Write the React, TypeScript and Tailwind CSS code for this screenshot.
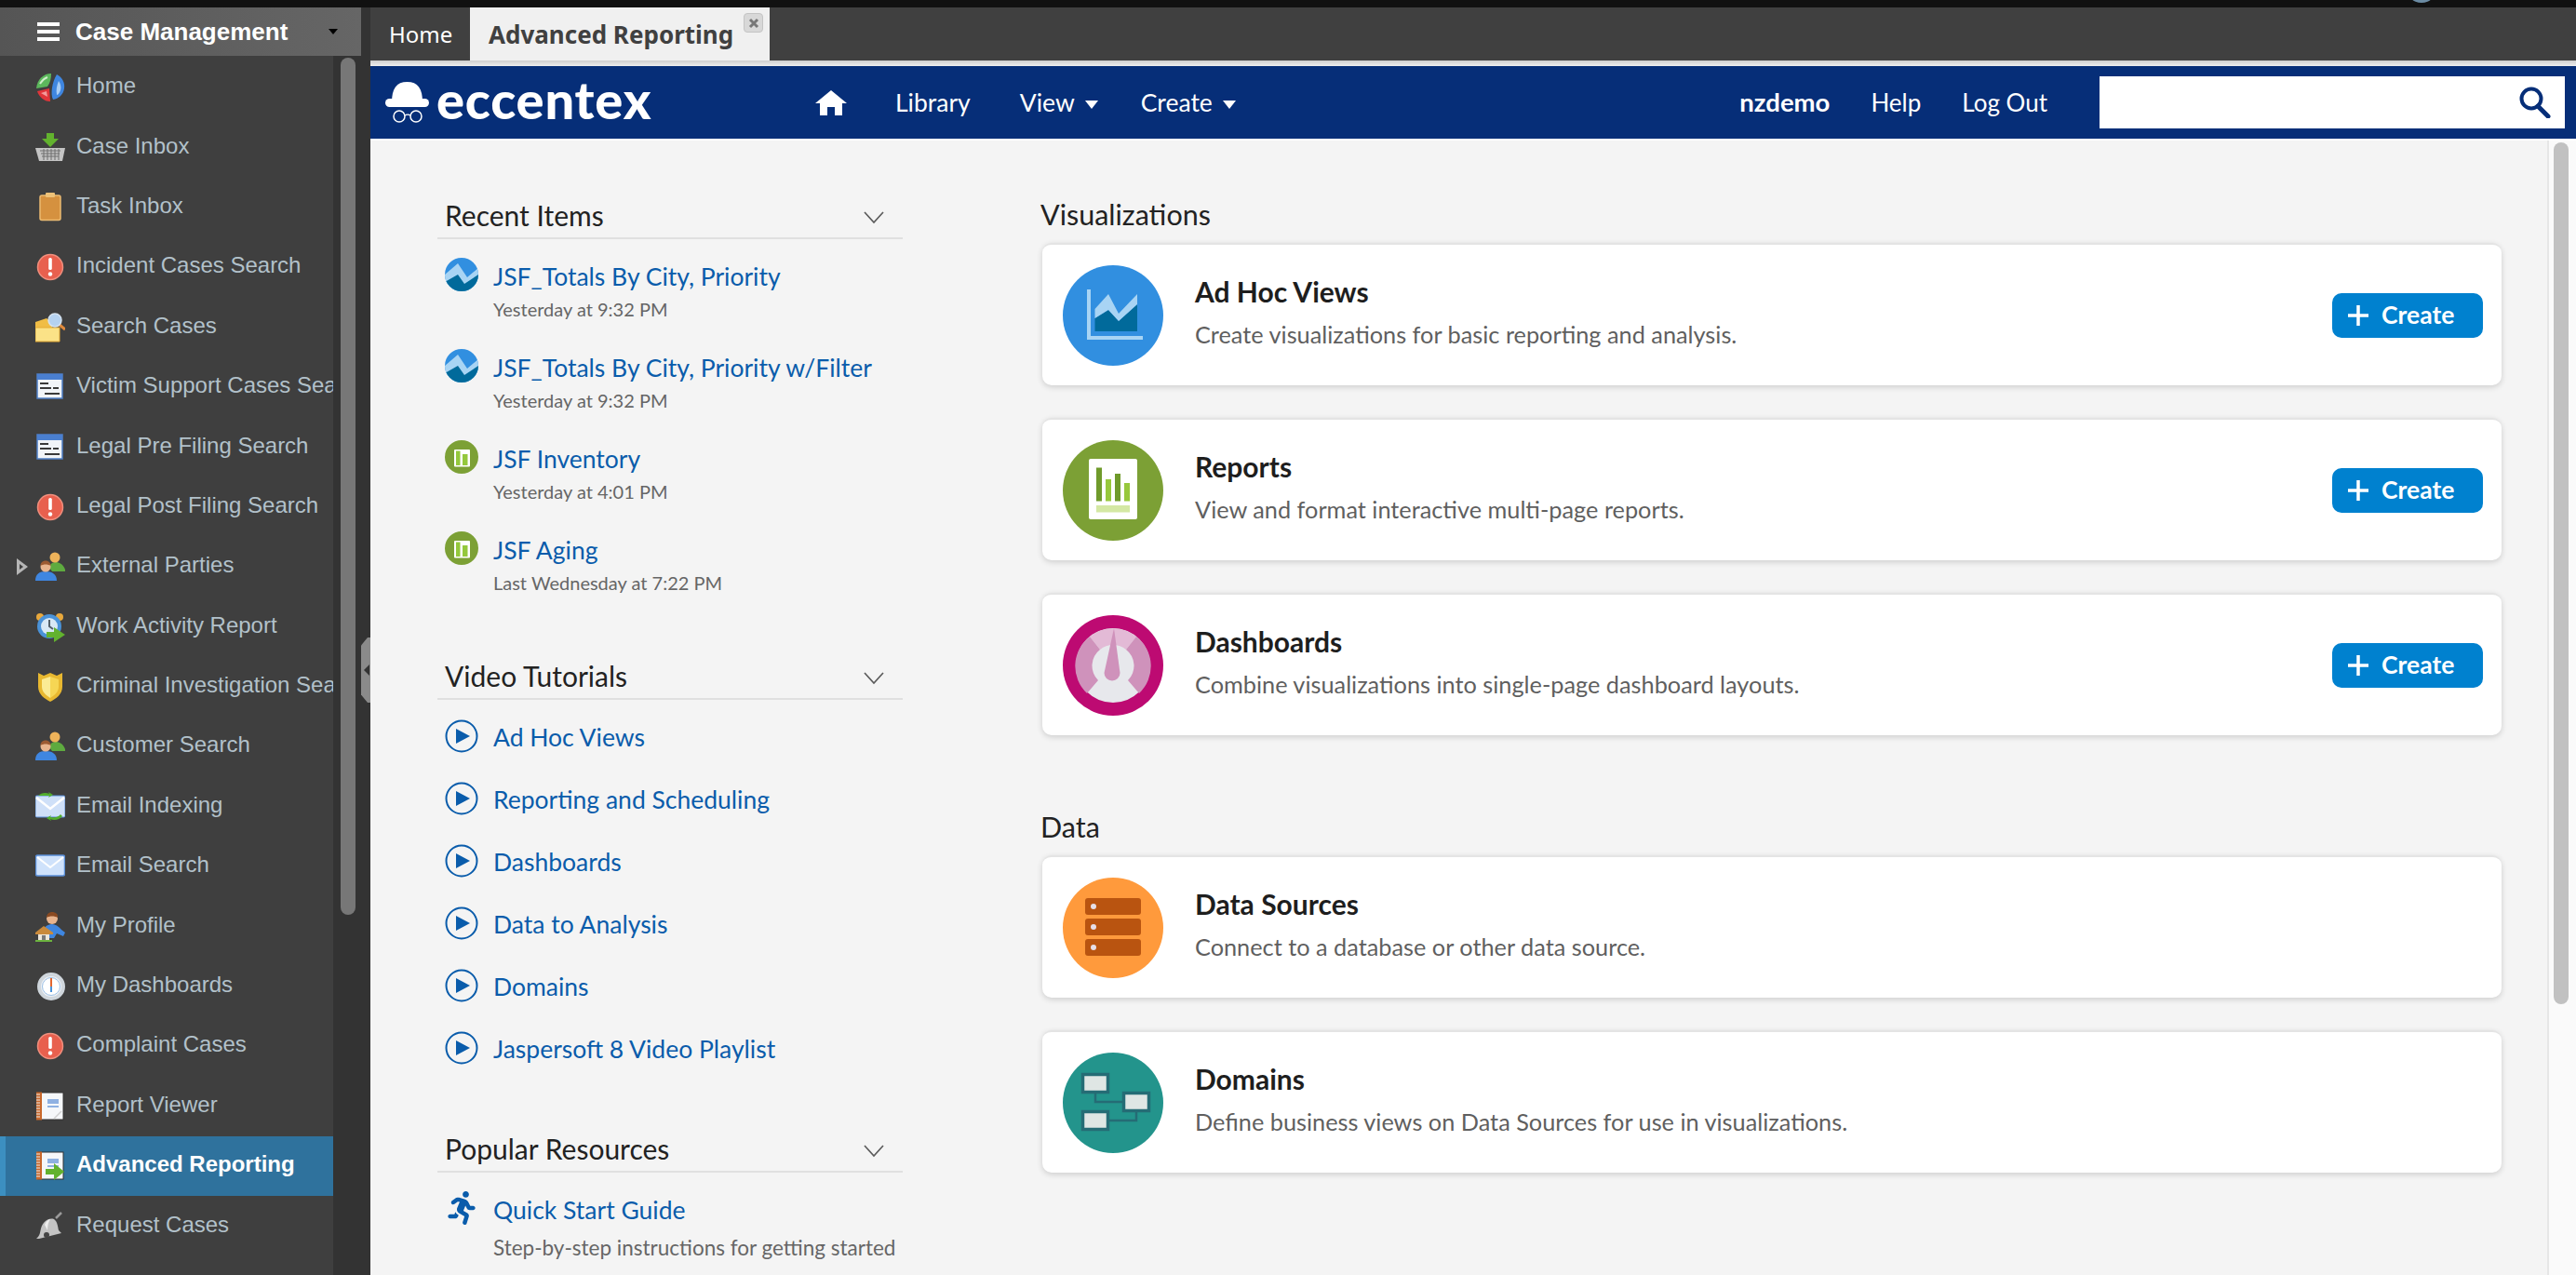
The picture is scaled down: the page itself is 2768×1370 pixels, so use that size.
import React from "react";
import { FaRunning } from "react-icons/fa";

const SANS = "font-['Liberation_Sans',Arial,sans-serif]";
const LATO = "font-['Lato','Noto_Sans',sans-serif]";

function SideIcon({ kind }: { kind: string }) {
  const c = "w-8 h-8 shrink-0";
  switch (kind) {
    case "pie":
      return (
        <svg viewBox="0 0 32 32" className={c}>
          <path d="M17 1C9 1 2 7 1 17l12-2c3-4 4-9 4-14z" fill="#5cb85c" />
          <path d="M5 12c2-3 5-6 8-7" stroke="#cfeecb" strokeWidth="2" fill="none" />
          <path d="M23 2c6 3 9 9 8 15-1 7-6 11-12 12-3-6-1-19 4-27z" fill="#3f86e0" />
          <path d="M25 9c2 3 3 6 2 10-1 3-3 5-4 5-1-5 0-10 2-15z" fill="#a8cdf5" />
          <path d="M2 20l13-3 1 14c-7 0-12-5-14-11z" fill="#e0353a" />
          <path d="M6 22l6-2 1 6z" fill="#f39a9a" />
        </svg>
      );
    case "basket":
      return (
        <svg viewBox="0 0 32 32" className={c}>
          <path d="M0 16h32l-3 14H4z" fill="#c4c4c4" />
          <path d="M5 19h22M6 22h20M7 25h18M9 17v12M13 17v12M17 17v12M21 17v12M25 17v12" stroke="#6e6e6e" strokeWidth="1" />
          <path d="M12 0h8v6h5l-9 9-9-9h5z" fill="#62b22e" />
        </svg>
      );
    case "clipboard":
      return (
        <svg viewBox="0 0 32 32" className={c}>
          <rect x="5" y="3" width="22" height="26.5" rx="2" fill="#d5913f" stroke="#ecbb72" strokeWidth="1.5" />
          <rect x="11" y="0" width="10" height="5" rx="1" fill="#eec278" />
        </svg>
      );
    case "alert":
      return (
        <svg viewBox="0 0 32 32" className={c}>
          <circle cx="16" cy="16" r="13.5" fill="#e8604e" stroke="#ef8f7e" strokeWidth="1.5" />
          <rect x="14.2" y="6" width="3.6" height="13" rx="1.6" fill="#fff" />
          <circle cx="16" cy="23.5" r="2.2" fill="#fff" />
        </svg>
      );
    case "folder":
      return (
        <svg viewBox="0 0 32 32" className={c}>
          <path d="M0 10l12-4 6 5v20H0z" fill="#f0bd45" />
          <path d="M0 16h26v15H0z" fill="#fbe287" stroke="#e5ab35" strokeWidth="1" />
          <path d="M26 13l6 5" stroke="#e08a3c" strokeWidth="3" />
          <circle cx="21" cy="8" r="7" fill="#b5d2f0" stroke="#d5e3f0" strokeWidth="1.5" />
        </svg>
      );
    case "form":
      return (
        <svg viewBox="0 0 32 32" className={c}>
          <rect x="2" y="2" width="27" height="26" fill="#f1f4f8" stroke="#4f7fc5" strokeWidth="1.5" />
          <rect x="2" y="2" width="27" height="6" fill="#4a7fd0" />
          <path d="M5 12h9M5 17h12M10 23h16M19 17h6" stroke="#3a3a3a" strokeWidth="2.2" />
        </svg>
      );
    case "people":
      return (
        <svg viewBox="0 0 32 32" className={c}>
          <path d="M15 17c0-4 4-6 7-6s8 2 10 8v2H18z" fill="#5eaa3f" />
          <circle cx="21" cy="6" r="5.5" fill="#eeb35a" />
          <path d="M0 31c0-7 4-10 11-10s12 3 12 10z" fill="#3f86e0" />
          <circle cx="11" cy="16" r="5.5" fill="#e8b48e" />
          <path d="M5.5 15c0-4 3-5.5 5.5-5.5s5.500 1.500 5.500 5.500c-3-2-8-2-11 0z" fill="#9c5a32" />
        </svg>
      );
    case "clock":
      return (
        <svg viewBox="0 0 32 32" className={c}>
          <circle cx="5" cy="5" r="4" fill="#e8a83c" />
          <circle cx="26" cy="5" r="4" fill="#e8a83c" />
          <circle cx="15" cy="15" r="13" fill="#4a92d8" />
          <circle cx="15" cy="15" r="9" fill="#d8e8f5" />
          <path d="M15 8v7l4 3" stroke="#53606a" strokeWidth="2" fill="none" />
          <path d="M12 21h8v-5l12 8-12 8v-5h-8z" fill="#62b22e" />
        </svg>
      );
    case "shield":
      return (
        <svg viewBox="0 0 32 32" className={c}>
          <path d="M3 1l6 3 7-3 7 3 6-3v15c0 8-7 13-13 16C10 29 3 24 3 16z" fill="#e8b830" />
          <path d="M7 8l9-3v23c-5-3-9-7-9-12z" fill="#fbeb94" />
          <path d="M16 5l9 3v8c0 5-4 9-9 12z" fill="#f6d654" />
        </svg>
      );
    case "mailsync":
      return (
        <svg viewBox="0 0 32 32" className={c}>
          <rect x="0" y="4" width="32" height="23" rx="1.500" fill="#cfe0f8" stroke="#5b8fd8" />
          <path d="M1 6l15 12L31 6" stroke="#fff" strokeWidth="2.500" fill="none" />
          <path d="M3 4c3-3 8-4 12-2l-1-2 5 3-5 3 1-2" fill="#52ae2c" />
          <path d="M29 26c-3 4-9 5-13 3l1 2-5-3 5-3-1 2c4 1 9 0 11-3z" fill="#52ae2c" />
        </svg>
      );
    case "mail":
      return (
        <svg viewBox="0 0 32 32" className={c}>
          <rect x="0.5" y="4" width="31" height="22" rx="2" fill="#cfe2fb" stroke="#5b8fd8" strokeWidth="1.500" />
          <path d="M2 6l14 11L30 6" stroke="#fff" strokeWidth="2" fill="none" />
        </svg>
      );
    case "profile":
      return (
        <svg viewBox="0 0 32 32" className={c}>
          <path d="M10 17c2-3 5-4 8-4s7 2 10 6l4 3-2 4-7-3-3 5H12z" fill="#3f86e0" />
          <circle cx="18" cy="7" r="6" fill="#e8b48e" />
          <path d="M12 6c0-4 3-6 6-6s7 2 6 6c-3-2-9-2-12 0z" fill="#8a4a22" />
          <path d="M0 22l9-7 10 7v2H0z" fill="#c98a3c" />
          <path d="M3 24h12v7H3z" fill="#ece6da" />
          <rect x="7" y="25" width="4" height="6" fill="#7a7a7a" />
          <rect x="0" y="30" width="18" height="2" fill="#6cb33f" />
        </svg>
      );
    case "gauge":
      return (
        <svg viewBox="0 0 32 32" className={c}>
          <circle cx="17" cy="16" r="13" fill="#eef1f5" stroke="#cfd6dc" strokeWidth="4" />
          <circle cx="17" cy="16" r="9.500" fill="#fff" stroke="#9cc0e5" strokeWidth="1" />
          <path d="M17 7v9" stroke="#e2662f" strokeWidth="2" />
          <path d="M17 16v6" stroke="#4a92d8" strokeWidth="2" />
        </svg>
      );
    case "book":
    case "bookarrow":
      return (
        <svg viewBox="0 0 32 32" className={c}>
          <rect x="3" y="1" width="27" height="29" fill="#f5f7fa" stroke="#333" strokeWidth="1" />
          <rect x="1" y="0.5" width="6" height="30" fill="#c8682c" />
          <path d="M1 3h4M1 6h4M1 9h4M1 12h4M1 15h4M1 18h4M1 21h4M1 24h4M1 27h4" stroke="#eee" strokeWidth="1" />
          <rect x="13" y="8" width="12" height="5" fill="#8fb1e2" />
          <rect x="13" y="15" width="12" height="2" fill="#8fb1e2" />
          {kind === "bookarrow" ? (
            <path d="M11 19h9v-6l11 9-11 9v-6h-9z" fill="#62b22e" />
          ) : (
            <path d="M20 29l8-8" stroke="#cfcfcf" strokeWidth="1.500" />
          )}
        </svg>
      );
    case "bell":
      return (
        <svg viewBox="0 0 32 32" className={c}>
          <path d="M20 8c4 3 4 8 5 12l3 3-24 6-3 0c4-3 4-7 5-11 2-7 8-12 14-10z" fill="#c4c4c4" />
          <path d="M10 14c1-3 3-5 6-6-2 3-3 7-3 12z" fill="#eee" />
          <circle cx="12" cy="25" r="3" fill="#444" />
          <path d="M22 7l6-6" stroke="#9a9a9a" strokeWidth="2.500" />
        </svg>
      );
    default:
      return (
        <svg viewBox="0 0 32 32" className={c}>
          <circle cx="16" cy="20" r="14" fill="#4a92d8" />
        </svg>
      );
  }
}

const rows: [string, string][] = [
  ["Home", "pie"],
  ["Case Inbox", "basket"],
  ["Task Inbox", "clipboard"],
  ["Incident Cases Search", "alert"],
  ["Search Cases", "folder"],
  ["Victim Support Cases Search", "form"],
  ["Legal Pre Filing Search", "form"],
  ["Legal Post Filing Search", "alert"],
  ["External Parties", "people"],
  ["Work Activity Report", "clock"],
  ["Criminal Investigation Search", "shield"],
  ["Customer Search", "people"],
  ["Email Indexing", "mailsync"],
  ["Email Search", "mail"],
  ["My Profile", "profile"],
  ["My Dashboards", "gauge"],
  ["Complaint Cases", "alert"],
  ["Report Viewer", "book"],
  ["Advanced Reporting", "bookarrow"],
  ["Request Cases", "bell"],
];

function Sidebar() {
  return (
    <aside className={`w-[398px] shrink-0 bg-[#333333] flex flex-col relative ${SANS}`}>
      <div className="h-[52px] w-[388px] bg-gradient-to-r from-[#555555] to-[#666666] flex items-center pl-[40px] shrink-0">
        <div className="w-6 flex flex-col gap-[4px]">
          <div className="h-[4px] bg-white" />
          <div className="h-[4px] bg-white" />
          <div className="h-[4px] bg-white" />
        </div>
        <span className="ml-[17px] text-[26px] font-bold text-white leading-none whitespace-nowrap">Case Management</span>
        <div className="ml-[44px] w-0 h-0 border-x-[5px] border-x-transparent border-t-[6px] border-t-black" />
      </div>
      <div className="flex flex-1 min-h-0">
        <div className="w-[358px] bg-[#3f3f3f] overflow-hidden pt-[2px]">
          {rows.map(([label, icon]) => {
            const active = label === "Advanced Reporting";
            return (
              <div
                key={label}
                className={`h-[64.4px] flex items-center ${active ? "bg-[#2f729d] border-l-[6px] border-l-[#3c8fc0]" : ""}`}
              >
                <div className={`${active ? "w-[32px]" : "w-[38px]"} shrink-0 flex justify-end pr-[8px]`}>
                  {label === "External Parties" && (
                    <svg viewBox="0 0 12 18" className="w-[12px] h-[18px]">
                      <path d="M0 0l12 9-12 9z" fill="#b5b5b5" />
                      <path d="M3 6l4 3-4 3z" fill="#3f3f3f" />
                    </svg>
                  )}
                </div>
                <SideIcon kind={icon} />
                <span
                  className={`ml-[12px] text-[24px] leading-none whitespace-nowrap -translate-y-[2px] ${
                    active ? "text-white font-bold" : "text-[#b2c1ca]"
                  }`}
                >
                  {label}
                </span>
              </div>
            );
          })}
          <div className="h-[64.4px] flex items-center pl-[38px]">
            <SideIcon kind="more" />
          </div>
        </div>
        <div className="flex-1 pl-[8px] pt-[2px]">
          <div className="w-4 h-[921px] rounded-lg bg-[#777777]" />
        </div>
      </div>
      <div
        className="absolute right-0 top-[677px] w-[10px] h-[70px] bg-[#8a8a8a] flex items-center justify-end pr-[1px] [clip-path:polygon(100%_0,100%_100%,70%_100%,0_88%,0_12%,70%_0)]"
      >
        <div className="w-0 h-0 border-y-[6px] border-y-transparent border-r-[6px] border-r-[#333333]" />
      </div>
    </aside>
  );
}

function TopNav() {
  const item = "text-white text-[26.5px] leading-none whitespace-nowrap";
  const right = "text-white text-[26px] leading-none whitespace-nowrap";
  const caret = "ml-[11px] mt-[4px] w-0 h-0 border-x-[7.5px] border-x-transparent border-t-[9px] border-t-white";
  return (
    <nav className={`h-[78px] bg-[#062e78] flex items-center shrink-0 ${LATO}`}>
      <div className="w-[478px] shrink-0 flex items-center pl-[16px]">
        <svg viewBox="0 0 47 44" className="w-[47px] h-[44px] shrink-0">
          <path d="M7 22C7 7 12 0 23.500 0S40 7 40 22z" fill="#fff" />
          <rect x="0" y="18" width="47" height="9" rx="4.500" fill="#fff" />
          <circle cx="15" cy="37" r="6" fill="none" stroke="#fff" strokeWidth="1.500" />
          <circle cx="33" cy="37" r="6" fill="none" stroke="#fff" strokeWidth="1.500" />
          <path d="M21 36c1.500-1 4.500-1 6 0" stroke="#fff" strokeWidth="1.500" fill="none" />
        </svg>
        <span className="ml-[8px] text-[56px] font-black text-white leading-none tracking-[0.8px] -translate-y-[3px]">eccentex</span>
      </div>
      <svg viewBox="0 0 34 27" className="w-[34px] h-[27px] shrink-0">
        <path d="M17 0L34 14h-5v13h-8v-9h-8v9H5V14H0z" fill="#fff" />
      </svg>
      <span className={`${item} ml-[52px]`}>Library</span>
      <span className={`${item} ml-[53px]`}>View</span>
      <div className={caret} />
      <span className={`${item} ml-[46px]`}>Create</span>
      <div className={caret} />
      <div className="ml-auto flex items-center">
        <span className="text-white text-[27.5px] leading-none whitespace-nowrap font-bold">nzdemo</span>
        <span className={`${right} ml-[44px]`}>Help</span>
        <span className={`${right} ml-[44px]`}>Log Out</span>
        <div className="ml-[56px] mr-[12px] w-[500px] h-[56px] bg-white flex items-center justify-end pr-[15px]">
          <svg viewBox="0 0 34 34" className="w-[34px] h-[34px]">
            <circle cx="13" cy="13" r="10.500" fill="none" stroke="#062e78" strokeWidth="4" />
            <path d="M20 21l11 11" stroke="#062e78" strokeWidth="5" strokeLinecap="round" />
          </svg>
        </div>
      </div>
    </nav>
  );
}

function Chevron() {
  return (
    <svg viewBox="0 0 22 14" className="w-[22px] h-[14px] mt-[5px]">
      <path d="M1 1l10 11L21 1" fill="none" stroke="#5b5b5b" strokeWidth="1.700" />
    </svg>
  );
}

function SectionHead({ title }: { title: string }) {
  return (
    <div className="h-[42px] border-b-2 border-b-[#e0e0e0] flex items-center justify-between pl-[8px] pr-[20px] pb-[8px]">
      <span className="text-[30px] text-[#222222] leading-none">{title}</span>
      <Chevron />
    </div>
  );
}

function WaveIcon({ id }: { id: string }) {
  return (
    <svg viewBox="0 0 36 36" className="w-9 h-9 shrink-0">
      <clipPath id={id}>
        <circle cx="18" cy="18" r="18" />
      </clipPath>
      <g clipPath={`url(#${id})`}>
        <rect width="36" height="36" fill="#318fe0" />
        <path d="M0 18L14 6l10 15L36 11v25H0z" fill="#a8d4f4" />
        <path d="M0 26l14-8 7 10 15-10v18H0z" fill="#016a9b" />
      </g>
    </svg>
  );
}

function BarIcon() {
  return (
    <svg viewBox="0 0 36 36" className="w-9 h-9 shrink-0">
      <circle cx="18" cy="18" r="18" fill="#7ca035" />
      <rect x="10" y="10" width="17" height="18.500" rx="1" fill="#fff" />
      <rect x="12" y="11.500" width="4.500" height="15.500" fill="#94c83c" />
      <rect x="19" y="15" width="5.500" height="12" fill="#94c83c" />
    </svg>
  );
}

function PlayIcon() {
  return (
    <svg viewBox="0 0 36 36" className="w-9 h-9 shrink-0">
      <circle cx="18" cy="18" r="16.500" fill="none" stroke="#0a5cab" strokeWidth="2" />
      <path d="M12 10l15 8-15 8z" fill="#0a5cab" />
    </svg>
  );
}

function Recent({ icon, title, sub }: { icon: React.ReactNode; title: string; sub: string }) {
  return (
    <div className="h-[98px] flex pl-[8px]">
      {icon}
      <div className="ml-[16px] flex flex-col">
        <span className="text-[26.500px] leading-[40px] text-[#0a5cab] whitespace-nowrap">{title}</span>
        <span className="text-[20px] leading-[30px] text-[#666666] whitespace-nowrap">{sub}</span>
      </div>
    </div>
  );
}

function Video({ title }: { title: string }) {
  return (
    <div className="h-[67px] flex pl-[8px]">
      <PlayIcon />
      <span className="ml-[16px] text-[26.500px] leading-[39px] text-[#0a5cab] whitespace-nowrap">{title}</span>
    </div>
  );
}

function LeftColumn() {
  return (
    <div className="w-[500px] shrink-0 pt-[64px]">
      <SectionHead title="Recent Items" />
      <div className="mt-[20px] mb-[41px]">
        <Recent icon={<WaveIcon id="w1" />} title="JSF_Totals By City, Priority" sub="Yesterday at 9:32 PM" />
        <Recent icon={<WaveIcon id="w2" />} title="JSF_Totals By City, Priority w/Filter" sub="Yesterday at 9:32 PM" />
        <Recent icon={<BarIcon />} title="JSF Inventory" sub="Yesterday at 4:01 PM" />
        <Recent icon={<BarIcon />} title="JSF Aging" sub="Last Wednesday at 7:22 PM" />
      </div>
      <SectionHead title="Video Tutorials" />
      <div className="mt-[21px] mb-[43px]">
        {["Ad Hoc Views", "Reporting and Scheduling", "Dashboards", "Data to Analysis", "Domains", "Jaspersoft 8 Video Playlist"].map((t) => (
          <Video key={t} title={t} />
        ))}
      </div>
      <SectionHead title="Popular Resources" />
      <div className="mt-[20px] flex pl-[8px]">
        <FaRunning className="w-9 h-9 shrink-0 text-[#0a5cab]" />
        <div className="ml-[16px] flex flex-col">
          <span className="text-[26.500px] leading-[40px] text-[#0a5cab] whitespace-nowrap">Quick Start Guide</span>
          <span className="text-[22.500px] leading-[42px] text-[#666666] whitespace-nowrap">Step-by-step instructions for getting started</span>
        </div>
      </div>
    </div>
  );
}

function AdHocArt() {
  return (
    <svg viewBox="0 0 108 108" className="w-[108px] h-[108px] shrink-0">
      <circle cx="54" cy="54" r="54" fill="#318fe0" />
      <path d="M26 26h4v50h56v4H26z" fill="#a8d4f4" />
      <path d="M34.500 57L49 48l11 12 20-18v29H34.500z" fill="#016a9b" />
      <path d="M34.500 47L49 31l11 21 20-21v11L60 60 49 48l-14.500 9z" fill="#a8d4f4" />
    </svg>
  );
}

function ReportArt() {
  return (
    <svg viewBox="0 0 108 108" className="w-[108px] h-[108px] shrink-0">
      <circle cx="54" cy="54" r="54" fill="#7ca035" />
      <rect x="28" y="20" width="52" height="65" rx="2" fill="#fff" />
      <rect x="36" y="29.500" width="6" height="36" fill="#6f9a2b" />
      <rect x="46" y="42" width="6" height="23.500" fill="#97c83c" />
      <rect x="56" y="36" width="6" height="29.500" fill="#6f9a2b" />
      <rect x="66" y="46" width="6" height="19.500" fill="#97c83c" />
      <rect x="36" y="70" width="36" height="7.500" fill="#d4e8a4" />
    </svg>
  );
}

function DashArt() {
  return (
    <svg viewBox="0 0 108 108" className="w-[108px] h-[108px] shrink-0">
      <circle cx="54" cy="54" r="54" fill="#bd0a72" />
      <circle cx="54" cy="54" r="40" fill="#e7e8ec" />
      <path d="M29 23A40 40 0 0 1 79 23L68 37A22 22 0 0 0 40 37z" fill="#e3bad6" />
      <path d="M29 23A40 40 0 0 0 26 84L38 70A22 22 0 0 1 40 37z" fill="#cf92bb" />
      <path d="M79 23A40 40 0 0 1 82 84L70 70A22 22 0 0 0 68 37z" fill="#cf92bb" />
      <path d="M55 14L44.500 62A8.500 8.500 0 0 0 61.500 62z" fill="#cf92bb" />
    </svg>
  );
}

function DataArt() {
  return (
    <svg viewBox="0 0 108 108" className="w-[108px] h-[108px] shrink-0">
      <circle cx="54" cy="54" r="54" fill="#ff9a3c" />
      {[22, 44, 66].map((y) => (
        <g key={y}>
          <rect x="24" y={y} width="60" height="18" rx="3" fill="#b95410" />
          <circle cx="33" cy={y + 9} r="3" fill="#e6dfe8" />
        </g>
      ))}
    </svg>
  );
}

function DomainArt() {
  return (
    <svg viewBox="0 0 108 108" className="w-[108px] h-[108px] shrink-0">
      <circle cx="54" cy="54" r="54" fill="#23948c" />
      <path d="M35 44v9h29M50 73h29v-9" fill="none" stroke="#256c75" strokeWidth="2.500" />
      {[
        [20, 22],
        [64, 42],
        [20, 62],
      ].map(([x, y]) => (
        <rect key={`${x}-${y}`} x={x + 1.500} y={y + 1.500} width="27" height="19" fill="#dfe6e4" stroke="#256c75" strokeWidth="3.500" />
      ))}
    </svg>
  );
}

function Card({ art, title, desc, create }: { art: React.ReactNode; title: string; desc: string; create?: boolean }) {
  return (
    <div className="h-[153px] bg-white rounded-[10px] border-t-2 border-t-[#e4e4e4] shadow-[0_2px_6px_rgba(0,0,0,0.16)] flex items-center pl-[22px] pr-[20px]">
      {art}
      <div className="ml-[34px] flex flex-col flex-1 -mt-[9px]">
        <span className="text-[30px] leading-[40px] font-bold text-[#1e1e1e] whitespace-nowrap">{title}</span>
        <span className="mt-[10px] text-[25.300px] leading-[32px] text-[#5f5f5f] whitespace-nowrap">{desc}</span>
      </div>
      {create && (
        <div className="w-[162px] h-[48px] rounded-[10px] bg-[#0081cf] flex items-center pl-[17px] shrink-0">
          <svg viewBox="0 0 22 22" className="w-[22px] h-[22px]">
            <path d="M11 0v22M0 11h22" stroke="#fff" strokeWidth="3.500" />
          </svg>
          <span className="ml-[14px] text-[26.500px] font-bold text-white leading-none">Create</span>
        </div>
      )}
    </div>
  );
}

function RightColumn() {
  return (
    <div className="ml-[150px] w-[1568px] shrink-0 pt-[59px]">
      <div className="h-[40px] mb-[11px] -ml-[2px] flex items-center text-[30.500px] text-[#222222] leading-none">Visualizations</div>
      <div className="flex flex-col gap-[35px]">
        <Card art={<AdHocArt />} title="Ad Hoc Views" desc="Create visualizations for basic reporting and analysis." create />
        <Card art={<ReportArt />} title="Reports" desc="View and format interactive multi-page reports." create />
        <Card art={<DashArt />} title="Dashboards" desc="Combine visualizations into single-page dashboard layouts." create />
      </div>
      <div className="h-[40px] mt-[78px] mb-[11px] -ml-[2px] flex items-center text-[30.500px] text-[#222222] leading-none">Data</div>
      <div className="flex flex-col gap-[35px]">
        <Card art={<DataArt />} title="Data Sources" desc="Connect to a database or other data source." />
        <Card art={<DomainArt />} title="Domains" desc="Define business views on Data Sources for use in visualizations." />
      </div>
    </div>
  );
}

export default function App() {
  return (
    <div className={`w-[2768px] h-[1370px] overflow-hidden flex flex-col bg-[#333333] ${LATO}`}>
      <div className="h-2 bg-[#111111] shrink-0 relative overflow-hidden">
        <div className="absolute left-[2585px] -top-[31px] w-[34px] h-[34px] rounded-full bg-[#6b8ba3]" />
      </div>
      <div className="flex flex-1 min-h-0">
        <Sidebar />
        <main className="flex-1 min-w-0 flex flex-col">
          <div className="h-[57px] bg-[#404040] flex items-end shrink-0 font-['Noto_Sans',sans-serif]">
            <div className="h-[57px] w-[107px] flex items-center pl-[20px] text-white text-[24px] leading-none">Home</div>
            <div className="h-[57px] w-[322px] bg-[#f0f0f0] relative flex items-center pl-[20px] text-[26px] font-bold leading-none text-[#404040] whitespace-nowrap">
              Advanced Reporting
              <div className="absolute right-[7px] top-[6px] w-[21px] h-[21px] rounded-[4px] bg-[#d8d8d8] border border-[#c4c4c4] flex items-center justify-center">
                <svg viewBox="0 0 12 12" className="w-[12px] h-[12px]">
                  <path d="M2 2l8 8M10 2l-8 8" stroke="#777" strokeWidth="3" />
                </svg>
              </div>
            </div>
          </div>
          <div className="h-[6px] shrink-0 bg-gradient-to-b from-[#cfcfcf] to-[#eeeeee]" />
          <TopNav />
          <div className="h-[2px] bg-white shrink-0" />
          <div className="flex flex-1 min-h-0 overflow-hidden">
            <div className="w-[2341px] bg-[#f4f4f4] pl-[72px] flex items-start border-r-2 border-r-[#e6e6e6]">
              <LeftColumn />
              <RightColumn />
            </div>
            <div className="flex-1 bg-[#fafafa] pl-[5px] pt-[2px]">
              <div className="w-4 h-[926px] rounded-lg bg-[#c1c1c1]" />
            </div>
          </div>
        </main>
      </div>
    </div>
  );
}
